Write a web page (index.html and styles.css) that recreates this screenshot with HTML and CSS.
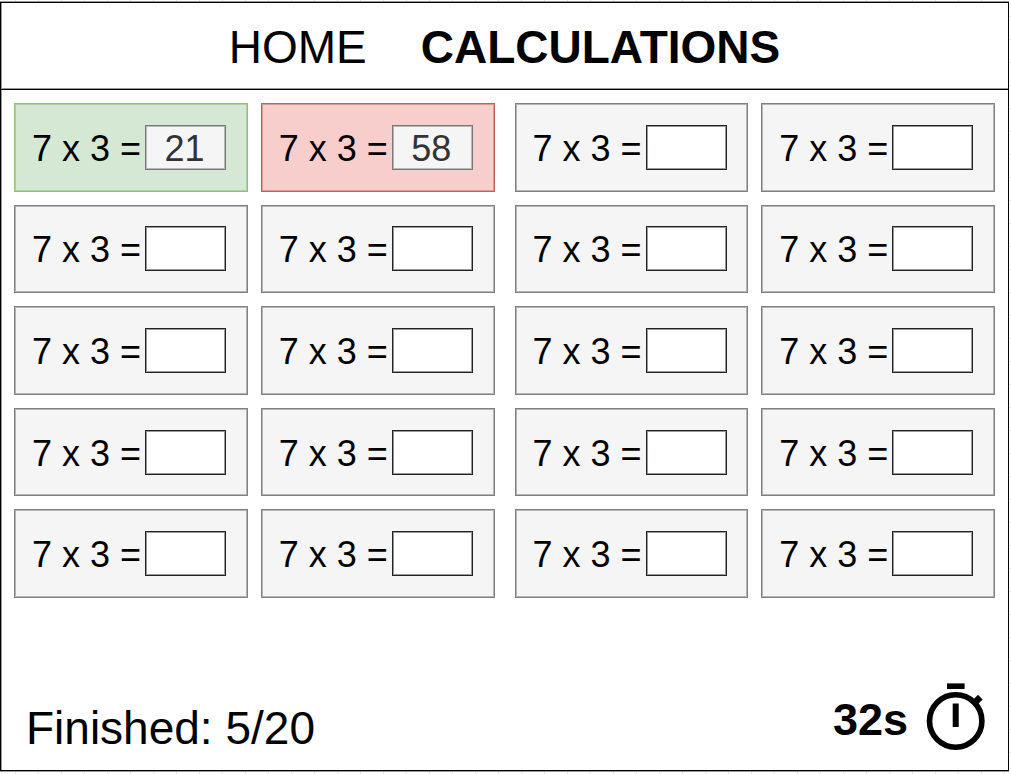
FILE: index.html
```html
<!DOCTYPE html>
<html lang="en">
<head>
<meta charset="utf-8">
<title>Calculations</title>
<link rel="stylesheet" href="styles.css">
</head>
<body>
<div class="frame">
  <header class="header">
    <nav class="nav">
      <a class="nav-link" href="#home">HOME</a>
      <a class="nav-link active" href="#calculations" aria-current="page">CALCULATIONS</a>
    </nav>
  </header>
  <main class="board">
    <div class="group">
      <label class="card correct"><span class="sum">7 x 3 =</span><input class="answer" type="text" value="21"></label>
      <label class="card wrong"><span class="sum">7 x 3 =</span><input class="answer" type="text" value="58"></label>
      <label class="card"><span class="sum">7 x 3 =</span><input class="answer" type="text"></label>
      <label class="card"><span class="sum">7 x 3 =</span><input class="answer" type="text"></label>
      <label class="card"><span class="sum">7 x 3 =</span><input class="answer" type="text"></label>
      <label class="card"><span class="sum">7 x 3 =</span><input class="answer" type="text"></label>
      <label class="card"><span class="sum">7 x 3 =</span><input class="answer" type="text"></label>
      <label class="card"><span class="sum">7 x 3 =</span><input class="answer" type="text"></label>
      <label class="card"><span class="sum">7 x 3 =</span><input class="answer" type="text"></label>
      <label class="card"><span class="sum">7 x 3 =</span><input class="answer" type="text"></label>
    </div>
    <div class="group">
      <label class="card"><span class="sum">7 x 3 =</span><input class="answer" type="text"></label>
      <label class="card"><span class="sum">7 x 3 =</span><input class="answer" type="text"></label>
      <label class="card"><span class="sum">7 x 3 =</span><input class="answer" type="text"></label>
      <label class="card"><span class="sum">7 x 3 =</span><input class="answer" type="text"></label>
      <label class="card"><span class="sum">7 x 3 =</span><input class="answer" type="text"></label>
      <label class="card"><span class="sum">7 x 3 =</span><input class="answer" type="text"></label>
      <label class="card"><span class="sum">7 x 3 =</span><input class="answer" type="text"></label>
      <label class="card"><span class="sum">7 x 3 =</span><input class="answer" type="text"></label>
      <label class="card"><span class="sum">7 x 3 =</span><input class="answer" type="text"></label>
      <label class="card"><span class="sum">7 x 3 =</span><input class="answer" type="text"></label>
    </div>
  </main>
  <footer class="footer">
    <div class="progress">Finished: 5/20</div>
    <div class="timer">
      <span class="time">32s</span>
      <svg class="stopwatch" width="60" height="68" viewBox="0 0 60 68" fill="none" stroke="#000" aria-hidden="true">
        <path d="M21 3.2h17.6" stroke-width="5.6"/>
        <circle cx="29.7" cy="38" r="26.2" stroke-width="5.6"/>
        <path d="M29.7 20.5v23.5" stroke-width="6"/>
        <path d="M47.5 21l6.8-6.8" stroke-width="6.6"/>
      </svg>
    </div>
  </footer>
</div>
</body>
</html>
```
FILE: styles.css
```css
* {
  box-sizing: border-box;
}

body {
  margin: 0;
  min-height: 100vh;
  display: flex;
  padding: 2px 2px 3px 0;
  font-family: "Liberation Sans", Arial, sans-serif;
  color: #000;
  background-color: #fff;
  background-image:
    linear-gradient(to right, #e4e4e4 1px, transparent 1px),
    linear-gradient(to bottom, #e4e4e4 1px, transparent 1px);
  background-size: 23px 23px;
  background-position: 15px 16px;
}

.frame {
  flex: 1;
  display: flex;
  flex-direction: column;
  border: 1px solid #000;
  background: #fff;
  box-shadow: inset 1px 0 #999, 0 -1px #999, 0 1px #999;
}

.header {
  height: 87px;
  display: flex;
  justify-content: center;
  align-items: center;
  padding-top: 2px;
  border-bottom: 1px solid #000;
  box-shadow: inset 0 -1px #999;
}

.nav {
  display: flex;
  gap: 54px;
}

.nav-link {
  color: #000;
  font-size: 46px;
  line-height: 52px;
  text-decoration: none;
}

.nav-link.active {
  font-weight: bold;
}

.board {
  flex: 1;
  display: grid;
  grid-template-columns: 1fr 1fr;
  gap: 20px;
  padding: 13px 13px 0;
}

.group {
  display: grid;
  grid-template-columns: 1fr 1fr;
  grid-auto-rows: 1fr;
  gap: 13px;
}

.card {
  display: flex;
  align-items: center;
  gap: 4px;
  padding-left: 17px;
  border: 1px solid #808080;
  box-shadow: inset 0 0 0 1px #b4b4b4;
  background: #f5f5f5;
  font-size: 36px;
  line-height: 40px;
  white-space: nowrap;
}

.card.correct {
  border-color: #93bd7d;
  box-shadow: inset 0 0 0 1px #b0d09f;
  background: #d5e8d4;
}

.card.wrong {
  border-color: #c0605c;
  box-shadow: inset 0 0 0 1px #dd9996;
  background: #f8cecc;
}

.sum {
  padding-top: 3px;
}

.answer {
  width: 81px;
  height: 45px;
  padding: 3px 2px 0 0;
  border: 1px solid #222;
  border-radius: 0;
  box-shadow: inset 0 0 0 1px #999;
  background: #fff;
  color: #333;
  font: inherit;
  text-align: center;
}

.correct .answer,
.wrong .answer {
  border-color: #777;
  box-shadow: inset 0 0 0 1px #b8b8b8;
  background: #f5f5f5;
}

.footer {
  display: flex;
  justify-content: space-between;
  align-items: flex-end;
  height: 172px;
  padding: 0 22px 16px 25px;
}

.progress {
  font-size: 46px;
  line-height: 52px;
}

.timer {
  display: flex;
  align-items: center;
  gap: 18px;
  padding-bottom: 3px;
  font-size: 45px;
  line-height: 52px;
  font-weight: bold;
}

.time {
  padding-top: 5px;
}
```
